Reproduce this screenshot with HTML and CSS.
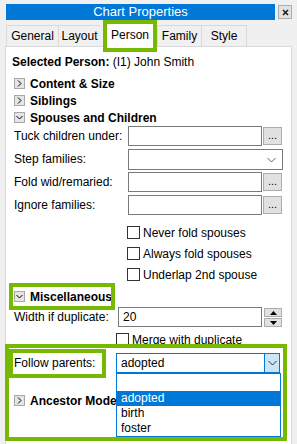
FILE: index.html
```html
<!DOCTYPE html>
<html lang="en">
<head>
  <meta charset="UTF-8">
  <title>Chart Properties</title>
  <link rel="stylesheet" href="styles.css">
</head>
<body>
  <div class="window">
    <div class="titlebar">
      <div class="title">Chart Properties</div>
      <div class="close"><svg width="7" height="7" viewBox="0 0 7 7"><path d="M1 1L6 6M6 1L1 6" stroke="#1a1a1a" stroke-width="1.5"/></svg></div>
    </div>

    <div class="tabs">
      <div class="tab tab-general">General</div>
      <div class="tab tab-layout">Layout</div>
      <div class="tab tab-person active">Person</div>
      <div class="tab tab-family">Family</div>
      <div class="tab tab-style">Style</div>
    </div>

    <div class="page">
      <div class="selected"><b>Selected Person:</b> (I1) John Smith</div>

      <div class="section">
        <span class="toggle"><svg width="9" height="9" viewBox="0 0 9 9"><polyline points="3,1.5 6,4.5 3,7.5" fill="none" stroke="#000"/></svg></span>
        Content &amp; Size
      </div>
      <div class="section">
        <span class="toggle"><svg width="9" height="9" viewBox="0 0 9 9"><polyline points="3,1.5 6,4.5 3,7.5" fill="none" stroke="#000"/></svg></span>
        Siblings
      </div>
      <div class="section">
        <span class="toggle"><svg width="9" height="9" viewBox="0 0 9 9"><polyline points="1.5,3 4.5,6 7.5,3" fill="none" stroke="#000"/></svg></span>
        Spouses and Children
      </div>

      <div class="fields">
        <label>Tuck children under:</label>
        <div class="textbox"></div>
        <div class="browse">...</div>

        <label>Step families:</label>
        <div class="combo wide">
          <span class="combo-arrow"><svg width="9" height="6" viewBox="0 0 9 6"><polyline points="0.5,1 4.5,5 8.5,1" fill="none" stroke="#606060"/></svg></span>
        </div>

        <label>Fold wid/remaried:</label>
        <div class="textbox"></div>
        <div class="browse">...</div>

        <label>Ignore families:</label>
        <div class="textbox"></div>
        <div class="browse">...</div>
      </div>

      <div class="checks">
        <div class="check"><span class="box"></span>Never fold spouses</div>
        <div class="check"><span class="box"></span>Always fold spouses</div>
        <div class="check"><span class="box"></span>Underlap 2nd spouse</div>
      </div>

      <div class="section misc">
        <span class="toggle"><svg width="9" height="9" viewBox="0 0 9 9"><polyline points="1.5,3 4.5,6 7.5,3" fill="none" stroke="#000"/></svg></span>
        Miscellaneous
      </div>

      <div class="dup-row">
        <label>Width if duplicate:</label>
        <div class="textbox value">20</div>
        <div class="spin">
          <span class="spin-btn"><svg width="7" height="4" viewBox="0 0 7 4"><polygon points="0,4 3.5,0 7,4" fill="#000"/></svg></span>
          <span class="spin-btn"><svg width="7" height="4" viewBox="0 0 7 4"><polygon points="0,0 3.5,4 7,0" fill="#000"/></svg></span>
        </div>
      </div>

      <div class="check merge"><span class="box"></span>Merge with duplicate</div>

      <div class="focus-area">
        <div class="follow-row">
          <label class="follow-label">Follow parents:</label>
          <div class="combo open">
            <span class="combo-text">adopted</span>
            <span class="combo-btn"><svg width="9" height="6" viewBox="0 0 9 6"><polyline points="0.5,1 4.5,5 8.5,1" fill="none" stroke="#333"/></svg></span>
            <ul class="list">
              <li class="blank"></li>
              <li class="current">adopted</li>
              <li>birth</li>
              <li>foster</li>
            </ul>
          </div>
        </div>
        <div class="section ancestor">
          <span class="toggle"><svg width="9" height="9" viewBox="0 0 9 9"><polyline points="3,1.5 6,4.5 3,7.5" fill="none" stroke="#000"/></svg></span>
          Ancestor Mode
        </div>
      </div>
    </div>
  </div>
</body>
</html>
```

FILE: styles.css
```css
body {
  margin: 0;
  width: 297px;
  height: 444px;
  overflow: hidden;
  background-color: #f0f0f0;
  color: #000;
  font-family: "Liberation Sans", Arial, sans-serif;
  font-size: 12px;
}
.window {
  padding-top: 4px;
}

/* title bar */
.titlebar {
  display: flex;
  align-items: flex-start;
  margin-left: 6px;
  height: 16px;
}
.title {
  width: 269px;
  height: 16px;
  background-color: #0078d7;
  color: #fff;
  font-size: 13px;
  line-height: 16px;
  text-align: center;
}
.close {
  display: flex;
  align-items: center;
  justify-content: center;
  box-sizing: border-box;
  width: 14px;
  height: 14px;
  margin: 1px 0 0 3px;
  background-color: #e1e1e1;
  border: 1px solid #adadad;
}

/* tabs */
.tabs {
  display: flex;
  align-items: flex-end;
  height: 21px;
  margin: 5px 0 0 6px;
}
.tab {
  box-sizing: border-box;
  height: 21px;
  line-height: 20px;
  text-align: center;
  background-color: #f0f0f0;
  border: 1px solid #d9d9d9;
  border-bottom: none;
  border-right: none;
}
.tab-general { width: 52px; }
.tab-layout { width: 42px; }
.tab-family { width: 44px; }
.tab-style { width: 46px; border-right: 1px solid #d9d9d9; }
.tab.active {
  position: relative;
  z-index: 1;
  width: 54px;
  height: 32px;
  margin: 0 0 -6px 3px;
  padding-top: 1px;
  line-height: 20px;
  background-color: #fff;
  border: 4px solid #76b900;
}

/* tab page */
.page {
  box-sizing: border-box;
  width: 287px;
  height: 420px;
  margin-left: 5px;
  padding: 7px 0 0 8px;
  background-color: #fff;
  border: 1px solid #d9d9d9;
}
.selected {
  height: 16px;
  line-height: 16px;
  margin-left: -2px;
}
.section {
  display: flex;
  align-items: center;
  gap: 5px;
  height: 17px;
  font-weight: bold;
}
.selected + .section {
  margin-top: 5px;
}
.toggle {
  display: flex;
  align-items: center;
  justify-content: center;
  box-sizing: border-box;
  width: 11px;
  height: 11px;
  background-color: #e5e5e5;
  border: 1px solid #a8a8a8;
}

/* form fields */
.fields {
  display: grid;
  grid-template-columns: 113px 134px 20px;
  grid-auto-rows: 20px;
  column-gap: 1px;
  row-gap: 3px;
}
.fields label {
  align-self: center;
}
.textbox {
  box-sizing: border-box;
  height: 20px;
  background-color: #fff;
  border: 1px solid #7a7a7a;
}
.browse {
  box-sizing: border-box;
  height: 18px;
  margin-top: 1px;
  width: 19px;
  text-align: center;
  line-height: 14px;
  font-size: 11px;
  background-color: #e1e1e1;
  border: 1px solid #adadad;
}
.combo {
  position: relative;
  box-sizing: border-box;
  height: 21px;
  background-color: #fff;
  border: 1px solid #7a7a7a;
}
.combo.wide {
  grid-column: 2 / 4;
}
.combo-arrow {
  position: absolute;
  right: 6px;
  top: 7px;
  display: flex;
}

/* checkboxes */
.checks {
  margin: 7px 0 0 113px;
}
.check {
  display: flex;
  align-items: center;
  gap: 3px;
  height: 21px;
}
.box {
  box-sizing: border-box;
  width: 13px;
  height: 13px;
  background-color: #fff;
  border: 1px solid #333;
}

.misc {
  width: 97px;
  height: 19px;
  margin: 2px 0 0 -1px;
  padding-left: 1px;
  outline: 4px solid #76b900;
}

.dup-row {
  display: grid;
  grid-template-columns: 102px 144px 19px;
  column-gap: 2px;
  height: 20px;
  margin-top: 1px;
}
.dup-row label {
  align-self: center;
}
.value {
  padding-left: 4px;
  line-height: 18px;
}
.spin {
  display: flex;
  flex-direction: column;
  gap: 1px;
  padding-top: 1px;
}
.spin-btn {
  display: flex;
  align-items: center;
  justify-content: center;
  box-sizing: border-box;
  width: 18px;
  height: 9px;
  background-color: #e1e1e1;
  border: 1px solid #adadad;
}
.merge {
  margin: 2px 0 0 102px;
}

/* highlighted area */
.focus-area {
  width: 274px;
  height: 89px;
  margin: -2px 0 0 -5px;
  outline: 4px solid #76b900;
}
.follow-row {
  display: flex;
  align-items: flex-start;
  gap: 14px;
  padding: 5px 0 0 4px;
}
.follow-label {
  box-sizing: border-box;
  width: 89px;
  height: 21px;
  line-height: 21px;
  padding-left: 1px;
  outline: 4px solid #76b900;
}
.combo.open {
  width: 164px;
  height: 20px;
  border-color: #0078d7;
}
.combo-text {
  display: block;
  padding-left: 4px;
  line-height: 18px;
}
.combo-btn {
  position: absolute;
  top: 0;
  right: 0;
  display: flex;
  align-items: center;
  justify-content: center;
  box-sizing: border-box;
  width: 15px;
  height: 18px;
  background-color: #cce4f7;
  border-left: 1px solid #0078d7;
}
.list {
  position: absolute;
  z-index: 2;
  top: 19px;
  left: -1px;
  box-sizing: border-box;
  width: 165px;
  margin: 0;
  padding: 0;
  list-style: none;
  background-color: #fff;
  border: 1px solid #0078d7;
}
.list li {
  height: 15px;
  line-height: 15px;
  padding-left: 4px;
}
.list li.blank {
  height: 17px;
}
.list li.current {
  background-color: #0078d7;
  color: #fff;
}
.ancestor {
  margin: 18px 0 0 5px;
}
```
